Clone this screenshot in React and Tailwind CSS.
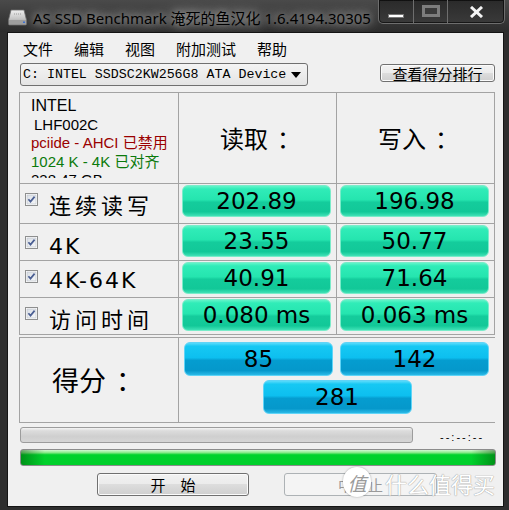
const LAT = "font-['Liberation_Sans','Noto_Sans_CJK_SC',sans-serif]";
const DV = "font-['DejaVu_Sans','Noto_Sans_CJK_SC',sans-serif]";
const CJK = "font-['Noto_Sans_CJK_SC',sans-serif]";

function GreenBox({ children }) {
  return (
    <div className={`ml-[3px] mt-[1px] w-[149px] h-[32px] rounded-[6px] border border-[#79ecc9] bg-[linear-gradient(to_bottom,#62f4c9_0%,#30ecb8_10%,#25e5af_46%,#14cc9c_54%,#12c898_86%,#3fe2b6_100%)] flex items-center justify-center text-[23px] leading-none text-black ${DV}`}>
      {children}
    </div>
  );
}

function BlueBox({ children, className = "" }) {
  return (
    <div className={`w-[149px] h-[34px] rounded-[6px] border border-[#5fd4f7] bg-[linear-gradient(to_bottom,#5adbfb_0%,#16c8f3_10%,#0dbfef_46%,#059dd0_54%,#0598cb_86%,#2ab9e7_100%)] flex items-center justify-center text-[23px] leading-none text-black ${DV} ${className}`}>
      {children}
    </div>
  );
}

function Check() {
  return (
    <svg width="13" height="13" viewBox="0 0 13 13" className="shrink-0">
      <defs>
        <linearGradient id="cbg" x1="0" y1="0" x2="1" y2="1">
          <stop offset="0" stopColor="#dadfe6" />
          <stop offset="1" stopColor="#f6f7f9" />
        </linearGradient>
      </defs>
      <rect x="0.5" y="0.5" width="12" height="12" fill="#fff" stroke="#8e8f8f" />
      <rect x="2" y="2" width="9" height="9" fill="url(#cbg)" stroke="#b9bec6" strokeWidth="0.6" />
      <path d="M3.4 6.3 L5.5 8.6 L9.6 3.6" stroke="#4b5f93" strokeWidth="1.7" fill="none" />
    </svg>
  );
}

function RowLabel({ text, latin, pt, h }) {
  return (
    <div className="flex items-start pl-[5px] h-full" style={{ paddingTop: pt }}>
      <div className="mt-[1px]">
        <Check />
      </div>
      <div className="ml-[11px] overflow-hidden" style={h ? { height: h } : undefined}>
        <span
          className={`block text-[22px] leading-[24px] text-black whitespace-nowrap ${latin ? DV + " tracking-[2px]" : CJK + " tracking-[4px]"}`}
        >
          {text}
        </span>
      </div>
    </div>
  );
}

function Colon({ ml }) {
  return <span className={ml}>：</span>;
}

export default function App() {
  const rows = [
    { label: "连续读写", latin: false, r: "202.89", w: "196.98", h: "h-[39px]", pt: 8 },
    { label: "4K", latin: true, r: "23.55", w: "50.77", h: "h-[36px]", pt: 11 },
    { label: "4K-64K", latin: true, r: "40.91", w: "71.64", h: "h-[36px]", pt: 8, lh: 21 },
    { label: "访问时间", latin: false, r: "0.080 ms", w: "0.063 ms", h: "h-[36px]", pt: 8 },
  ];
  return (
    <div className={`w-[509px] h-[510px] bg-[#2e2e2e] flex flex-col overflow-hidden ${LAT}`}>
      {/* title bar */}
      <div className="h-[32px] flex items-start shrink-0 bg-[linear-gradient(to_bottom,#4a4a4a,#2c2c2c)]">
        <svg width="19" height="17" viewBox="0 0 19 17" className="ml-[8px] mt-[9px] shrink-0">
          <defs>
            <linearGradient id="ssd" x1="0" y1="0" x2="0" y2="1">
              <stop offset="0" stopColor="#f0f0f0" />
              <stop offset="0.6" stopColor="#c4c4c4" />
              <stop offset="1" stopColor="#8a8a8a" />
            </linearGradient>
          </defs>
          <path d="M3 1 H16 L18.5 11 V15 Q18.5 16 17.5 16 H1.5 Q0.5 16 0.5 15 V11 Z" fill="url(#ssd)" stroke="#6c6c6c" strokeWidth="0.8" />
          <rect x="1" y="11" width="17" height="4.5" fill="#9e9e9e" />
          <rect x="15" y="12.5" width="2" height="1.5" fill="#3b6fd0" />
          <path d="M6 5 H13" stroke="#9a9a9a" strokeWidth="1" strokeDasharray="1 1" />
        </svg>
        <div className="ml-[6px] mt-[6px] text-[15px] leading-[24px] text-black font-['Noto_Sans','Noto_Sans_CJK_SC',sans-serif] whitespace-nowrap [text-shadow:0_0_8px_rgba(255,255,255,0.75),0_0_14px_rgba(255,255,255,0.5)]">
          AS SSD Benchmark 淹死的鱼汉化 1.6.4194.30305
        </div>
        <div className="flex-1" />
        <div className="mr-[4px] shrink-0 flex h-[24px] rounded-b-[5px] border border-t-0 border-[#6e6e6e] bg-[linear-gradient(to_bottom,#2a2a2a,#3a3a3a)] shadow-[inset_0_0_0_1px_rgba(0,0,0,0.6)]">
          <div className="w-[35px] flex items-center justify-center border-r border-[#6e6e6e]">
            <div className="w-[16px] h-[4px] bg-white mt-[9px] border border-[#777]" />
          </div>
          <div className="w-[34px] flex items-center justify-center border-r border-[#6e6e6e]">
            <div className="w-[18px] h-[12px] bg-[#7d7d7d] flex items-center justify-center mt-[-1px]">
              <div className="w-[12px] h-[6px] bg-[#3a3a3a]" />
            </div>
          </div>
          <div className="w-[56px] flex items-center justify-center">
            <svg width="15" height="12" viewBox="0 0 15 12">
              <path d="M2 1 L13 11 M13 1 L2 11" stroke="#f4f4f4" strokeWidth="3" />
            </svg>
          </div>
        </div>
      </div>

      {/* client */}
      <div className="ml-[7px] w-[497px] h-[475px] border border-[#141414] bg-[#f0f0f0] flex flex-col shrink-0">
        {/* menu */}
        <div className={`h-[28px] flex items-start pl-[15px] pt-[7px] gap-[21px] text-[15px] leading-[18px] text-black ${CJK}`}>
          <span>文件</span>
          <span>编辑</span>
          <span>视图</span>
          <span>附加测试</span>
          <span>帮助</span>
        </div>
        {/* combo row */}
        <div className="h-[28px] flex items-start">
          <div className="ml-[12px] mt-[2px] w-[288px] h-[23px] rounded-[3px] border border-[#707070] bg-[linear-gradient(to_bottom,#f4f4f4,#e4e4e4)] flex items-center pl-[2px] pr-[6px]">
            <span className="font-['Liberation_Mono',monospace] text-[13.3px] leading-none text-black whitespace-nowrap">
              C: INTEL SSDSC2KW256G8 ATA Device
            </span>
            <div className="flex-1" />
            <svg width="10" height="6" viewBox="0 0 10 6">
              <path d="M0 0 H10 L5 6 Z" fill="#000" />
            </svg>
          </div>
          <div className={`ml-auto mr-[8px] mt-[3px] w-[115px] h-[18px] rounded-[3px] border border-[#707070] bg-[linear-gradient(to_bottom,#f2f2f2_0%,#ebebeb_50%,#dddddd_50%,#cfcfcf_100%)] shadow-[inset_0_0_0_1px_#fbfbfb] flex items-center justify-center text-[15px] leading-none text-black ${CJK}`}>
            查看得分排行
          </div>
        </div>

        {/* main grid */}
        <div className="ml-[11px] mt-[3px] w-[476px] border border-[#a3a3a3] bg-[#a3a3a3] grid grid-cols-[158px_157px_157px] gap-px">
          {/* header */}
          <div className="h-[90px] bg-[#f0f0f0] pl-[11px] pt-[4px]">
            <div className="h-[81px] overflow-hidden text-[15px] leading-[18.5px] whitespace-nowrap">
              <div className="text-[16px] text-black">INTEL</div>
              <div className="text-black pl-[3px]">LHF002C</div>
              <div className="text-[#9a0000]">pciide - AHCI 已禁用</div>
              <div className="text-[#0b7a0b]">1024 K - 4K 已对齐</div>
              <div className="text-black">238.47 GB</div>
            </div>
          </div>
          <div className={`h-[90px] bg-[#f0f0f0] flex items-center justify-center pl-[6px] text-[24px] text-black ${CJK}`}>
            <span>读取</span>
            <Colon ml="ml-[9px]" />
          </div>
          <div className={`h-[90px] bg-[#f0f0f0] flex items-center justify-center pl-[6px] text-[24px] text-black ${CJK}`}>
            <span>写入</span>
            <Colon ml="ml-[9px]" />
          </div>
          {rows.map((r) => (
            <div key={r.label} className="contents">
              <div className={`${r.h} bg-[#f0f0f0]`}>
                <RowLabel text={r.label} latin={r.latin} pt={r.pt} h={r.lh} />
              </div>
              <div className={`${r.h} bg-[#f0f0f0]`}>
                <GreenBox>{r.r}</GreenBox>
              </div>
              <div className={`${r.h} bg-[#f0f0f0]`}>
                <GreenBox>{r.w}</GreenBox>
              </div>
            </div>
          ))}
        </div>

        {/* score */}
        <div className="ml-[11px] mt-[2px] w-[476px] border border-[#a3a3a3] bg-[#a3a3a3] grid grid-cols-[158px_316px] gap-px">
          <div className={`h-[84px] bg-[#f0f0f0] flex items-center justify-start pl-[32px] text-[27px] text-black ${CJK}`}>
            <span>得分</span>
            <Colon ml="ml-[10px]" />
          </div>
          <div className="h-[84px] bg-[#f0f0f0] flex flex-col pt-[4px]">
            <div className="flex pl-[5px] gap-[7px]">
              <BlueBox>85</BlueBox>
              <BlueBox>142</BlueBox>
            </div>
            <div className="flex justify-center mt-[4px]">
              <BlueBox>281</BlueBox>
            </div>
          </div>
        </div>

        {/* progress */}
        <div className="flex items-center mt-[4px] h-[16px]">
          <div className="ml-[12px] w-[393px] h-[16px] rounded-[3px] border border-[#9c9c9c] bg-[linear-gradient(to_bottom,#f4f4f4_0%,#dcdcdc_20%,#cfcfcf_60%,#d6d6d6_100%)]" />
          <span className="ml-[27px] mt-[4px] text-[11px] leading-none tracking-[2px] text-black font-['Liberation_Sans',sans-serif]">
            --:--:--
          </span>
        </div>

        <div className="ml-[12px] mt-[6px] w-[476px] h-[17px] rounded-[3px] border border-[#8c8c8c] bg-[linear-gradient(to_right,rgba(0,70,0,0.45),rgba(0,70,0,0)_5%,rgba(0,70,0,0)_95%,rgba(0,70,0,0.45)),linear-gradient(to_bottom,#d4f8d4_0%,#86ea86_18%,#00d22c_32%,#00d02b_100%)]" />

        {/* buttons */}
        <div className="relative flex mt-[7px]">
          <div className={`ml-[89px] w-[152px] h-[23px] rounded-[3px] border border-[#707070] bg-[linear-gradient(to_bottom,#f2f2f2_0%,#ebebeb_50%,#dddddd_50%,#cfcfcf_100%)] shadow-[inset_0_0_0_1px_#fbfbfb] flex items-center justify-center text-[15px] leading-none text-black ${CJK}`}>
            开　始
          </div>
          <div className={`ml-[35px] w-[153px] h-[23px] rounded-[3px] border border-[#adb2b5] bg-[#f4f4f4] flex items-center justify-center text-[15px] leading-none text-[#9a9a9a] ${CJK}`}>
            中　止
          </div>
          {/* watermark */}
          <div className="absolute left-[335px] top-[-6px] w-[28px] h-[30px] rounded-full bg-white shadow-[0_0_2px_rgba(0,0,0,0.35)] flex items-center justify-center">
            <span className={`text-[19px] leading-none text-[#9a9a9a] italic ${CJK}`}>值</span>
          </div>
          <span className={`absolute left-[377px] top-[-1px] text-[22px] leading-none text-white [text-shadow:0_0_1px_#9c9c9c,0_0_1px_#9c9c9c] ${CJK}`}>
            什么值得买
          </span>
        </div>
      </div>
    </div>
  );
}
